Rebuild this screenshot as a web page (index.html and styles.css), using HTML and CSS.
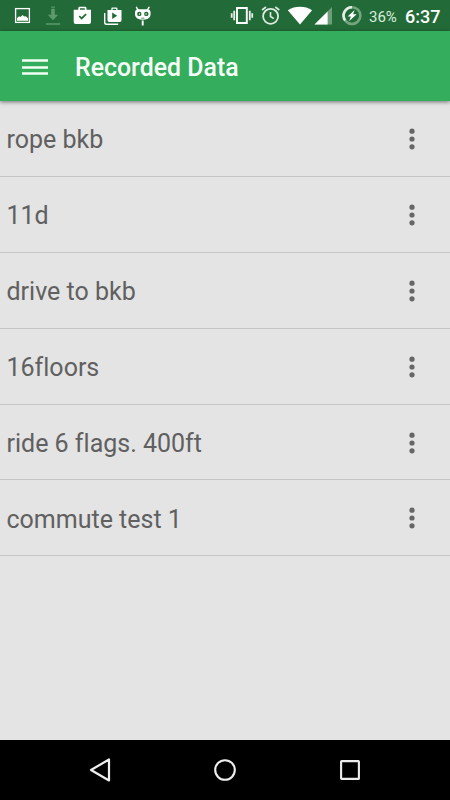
FILE: index.html
```html
<!DOCTYPE html>
<html lang="en">
<head>
<meta charset="utf-8">
<meta name="viewport" content="width=device-width, initial-scale=1">
<title>Recorded Data</title>
<link rel="stylesheet" href="styles.css">
</head>
<body>
<div class="screen">
  <div class="status">
    <div class="notifications">
      <svg width="24" height="31" viewBox="11 0 24 31"><rect x="15.600" y="8.600" width="13.800" height="13.800" fill="none" stroke="#fff" stroke-width="1.300"/><path fill="#fff" d="M17 20.8v-2.800l2.200-1.800 1.300.8 2.200-2 1.300 1.600 1.700-.3 2.300 2v2.500z"/></svg>
      <svg width="30" height="31" viewBox="38 0 30 31"><path fill="#5c9a6b" d="M51.200 6.500h3.600v1.300h-3.600zM51.200 8.800h3.600v6h3.400L53 20.300l-5.200-5.500h3.400zM46 23.300h14v1.500H46z"/></svg>
      <svg width="30" height="31" viewBox="68 0 30 31"><path fill="#fff" fill-rule="evenodd" d="M78.300 9.800V8.200q0-1.400 1.400-1.400h5.400q1.400 0 1.400 1.400v1.600H91v12.300q0 2-2 2H75.700q-2 0-2-2V9.800zM80 9.800h4.800V8.300H80z"/><path d="M79.300 16l2.300 2.500 4.500-4.400" fill="none" stroke="#226b38" stroke-width="1.800"/></svg>
      <svg width="30" height="31" viewBox="98 0 30 31"><path d="M104.700 13v9.500q0 1.800 1.800 1.800h11.700" fill="none" stroke="#fff" stroke-width="1.400"/><path fill="#fff" fill-rule="evenodd" d="M111.300 10V8.800q0-1.300 1.300-1.300h3.600q1.300 0 1.300 1.300V10h4v10.200q0 1.800-1.800 1.800h-10.400q-1.800 0-1.800-1.800V10zM112.600 10h3.600V8.800h-3.600z"/><path fill="#226b38" d="M112.200 12.500l5 3.300-5 3.300z"/></svg>
      <svg width="30" height="31" viewBox="128 0 30 31"><path d="M136.500 7.300l1.500 2.500M149 7.300l-1.500 2.500" stroke="#fff" stroke-width="1.500" stroke-linecap="round"/><path fill="#fff" d="M135 12.500q.4-3.300 3-3.300h9.600q2.600 0 3 3.300.3 4.800-2.800 6.300-5 1.800-10 0-3.100-1.500-2.800-6.300z"/><circle cx="139.300" cy="13.900" r="2.200" fill="#226b38"/><circle cx="146.300" cy="13.900" r="2.200" fill="#226b38"/><circle cx="139.500" cy="14" r=".7" fill="#fff"/><circle cx="146.100" cy="14" r=".7" fill="#fff"/><path d="M141.300 18.200h3" stroke="#226b38" stroke-width=".8"/><path d="M142.700 20.500v5" stroke="#fff" stroke-width="1.900"/></svg>
    </div>
    <div class="indicators">
      <svg width="32" height="31" viewBox="226 0 32 31"><path d="M237 8h9.800v15H237z" fill="none" stroke="#fff" stroke-width="1.900"/><path d="M231.700 13.300v4.500M234.200 10.700v9.600M249.800 10.700v9.600M252.200 13.300v4.500" stroke="#e6f0e8" stroke-width="1.800"/></svg>
      <svg width="28" height="31" viewBox="258 0 28 31"><circle cx="270.600" cy="16.300" r="7.500" fill="none" stroke="#dfeae0" stroke-width="1.800"/><path d="M270.500 12v4.500l3.300 2.100M262 10l4-3M279.300 10l-4-3" fill="none" stroke="#dfeae0" stroke-width="1.600"/></svg>
      <svg width="28" height="31" viewBox="286 0 28 31"><path fill="#fff" d="M287.800 10.300c7-4.600 17.500-4.600 24.300 0L300 24.600z"/></svg>
      <svg width="26" height="31" viewBox="314 0 26 31"><path fill="#6d9d79" d="M332 7v17.500h-17.500z"/><path fill="#fff" d="M327.600 11.400v13.100h-13.100z"/></svg>
      <svg width="29" height="31" viewBox="340 0 29 31"><circle cx="352" cy="15.600" r="8.400" fill="none" stroke="#73a67f" stroke-width="2.600"/><path d="M345.100 20.400a8.400 8.400 0 0 1 6.900-13.200" fill="none" stroke="#e6eee6" stroke-width="2.600"/><path fill="#fff" d="M354.600 9.900l-7 6.600h3.300l-1.700 4.600 7.500-6.800h-3.600z"/></svg>
      <span class="battery">36%</span>
      <span class="clock">6:37</span>
    </div>
  </div>
  <header class="toolbar">
    <svg class="menu" width="26" height="16" viewBox="0 0 26 16"><path d="M0 1.500h26M0 8.500h26M0 14.500h26" stroke="#f1fff4" stroke-width="2.500"/></svg>
    <h1 class="title">Recorded Data</h1>
  </header>
  <ul class="list">
    <li class="row"><span class="name">rope bkb</span><svg class="more" width="8" height="22" viewBox="0 0 8 22"><circle cx="4" cy="3.200" r="2.600"/><circle cx="4" cy="11" r="2.600"/><circle cx="4" cy="18.800" r="2.600"/></svg></li>
    <li class="row"><span class="name">11d</span><svg class="more" width="8" height="22" viewBox="0 0 8 22"><circle cx="4" cy="3.200" r="2.600"/><circle cx="4" cy="11" r="2.600"/><circle cx="4" cy="18.800" r="2.600"/></svg></li>
    <li class="row"><span class="name">drive to bkb</span><svg class="more" width="8" height="22" viewBox="0 0 8 22"><circle cx="4" cy="3.200" r="2.600"/><circle cx="4" cy="11" r="2.600"/><circle cx="4" cy="18.800" r="2.600"/></svg></li>
    <li class="row"><span class="name">16floors</span><svg class="more" width="8" height="22" viewBox="0 0 8 22"><circle cx="4" cy="3.200" r="2.600"/><circle cx="4" cy="11" r="2.600"/><circle cx="4" cy="18.800" r="2.600"/></svg></li>
    <li class="row"><span class="name">ride 6 flags. 400ft</span><svg class="more" width="8" height="22" viewBox="0 0 8 22"><circle cx="4" cy="3.200" r="2.600"/><circle cx="4" cy="11" r="2.600"/><circle cx="4" cy="18.800" r="2.600"/></svg></li>
    <li class="row"><span class="name">commute test 1</span><svg class="more" width="8" height="22" viewBox="0 0 8 22"><circle cx="4" cy="3.200" r="2.600"/><circle cx="4" cy="11" r="2.600"/><circle cx="4" cy="18.800" r="2.600"/></svg></li>
  </ul>
  <nav class="navbar">
    <svg width="24" height="26" viewBox="0 0 24 26"><path d="M21 2.500v21L3 13z" fill="none" stroke="#eee" stroke-width="2.200" stroke-linejoin="round"/></svg>
    <svg width="24" height="26" viewBox="0 0 24 26"><circle cx="12" cy="13" r="9.800" fill="none" stroke="#eee" stroke-width="2.100"/></svg>
    <svg width="24" height="26" viewBox="0 0 24 26"><rect x="3.100" y="4.100" width="17.800" height="17.800" rx=".5" fill="none" stroke="#eee" stroke-width="2.100"/></svg>
  </nav>
</div>
</body>
</html>
```
FILE: styles.css
```css
* {
  box-sizing: border-box;
}

body {
  margin: 0;
  font-family: Roboto, "Liberation Sans", sans-serif;
}

svg {
  display: block;
  flex: none;
}

.screen {
  display: flex;
  flex-direction: column;
  width: 450px;
  height: 800px;
  overflow: hidden;
  background: #e4e4e4;
}

.status {
  display: flex;
  justify-content: space-between;
  height: 31px;
  flex: none;
  background: #226b38;
  color: #fff;
}

.notifications {
  display: flex;
  padding-left: 11px;
}

.notifications svg:first-child {
  margin-right: 3px;
}

.indicators {
  display: flex;
  width: 224px;
}

.battery {
  width: 36px;
  font-size: 15px;
  line-height: 34px;
  color: #dcebdd;
}

.clock {
  font-size: 18px;
  font-weight: 500;
  line-height: 34px;
  white-space: nowrap;
}

.toolbar {
  display: flex;
  align-items: center;
  height: 70px;
  flex: none;
  padding: 1px 22px 0;
  background: #34ad5d;
  box-shadow: 0 1px 4px rgba(0, 0, 0, 0.5);
}

.title {
  margin: 2px 0 0 27px;
  font-size: 24.900px;
  font-weight: 500;
  line-height: 32px;
  color: #f5fff7;
  white-space: nowrap;
}

.list {
  flex: 1;
  margin: 0;
  padding: 0;
  list-style: none;
}

.row {
  display: flex;
  align-items: center;
  justify-content: space-between;
  height: 75.900px;
  padding: 1px 34px 0 6.500px;
  border-bottom: 1px solid #c5c5c5;
}

.name {
  padding-top: 3px;
  font-size: 25px;
  line-height: 32px;
  color: #606060;
  font-variant-ligatures: none;
}

.more {
  fill: #666;
}

.navbar {
  display: flex;
  align-items: center;
  justify-content: space-between;
  height: 60px;
  flex: none;
  padding: 0 88px;
  background: #000;
}
```
